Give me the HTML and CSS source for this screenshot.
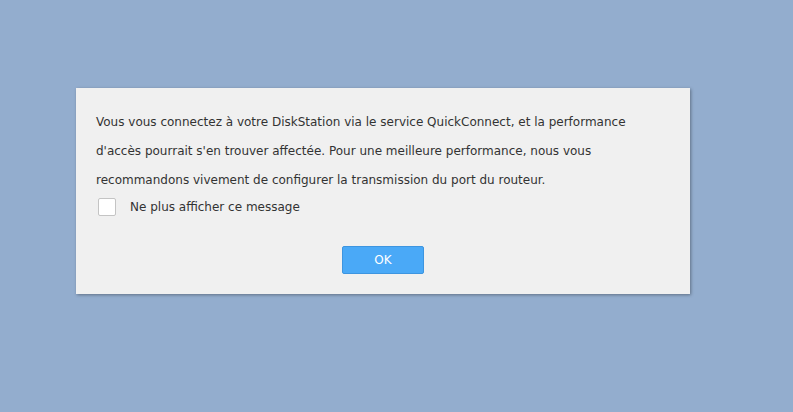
FILE: index.html
```html
<!DOCTYPE html>
<html lang="fr">
<head>
    <meta charset="UTF-8">
    <title>QuickConnect</title>
    <link rel="stylesheet" href="styles.css">
</head>
<body>
    <div class="dialog">
        <p class="message">Vous vous connectez à votre DiskStation via le service QuickConnect, et la performance<br>d'accès pourrait s'en trouver affectée. Pour une meilleure performance, nous vous<br>recommandons vivement de configurer la transmission du port du routeur.</p>
        <label class="check">
            <span class="box"></span>
            <span>Ne plus afficher ce message</span>
        </label>
        <div class="actions">
            <button class="button">OK</button>
        </div>
    </div>
</body>
</html>
```

FILE: styles.css
```css
body {
    margin: 0;
    padding: 88px 0 0 76px;
    height: 412px;
    box-sizing: border-box;
    background-color: #93adce;
    font-family: 'DejaVu Sans', Verdana, sans-serif;
    color: #333;
}

.dialog {
    box-sizing: border-box;
    width: 614px;
    height: 206px;
    padding: 20px 20px 0 20px;
    background-color: #f0f0f0;
    box-shadow: 1px 1px 3px rgba(0, 0, 0, 0.35);
}

.message {
    margin: 0;
    font-size: 12px;
    line-height: 29px;
    white-space: nowrap;
}

.check {
    display: flex;
    align-items: center;
    gap: 14px;
    margin: 2px 0 0 2px;
    height: 20px;
    font-size: 12px;
}

.box {
    width: 16px;
    height: 16px;
    background-color: #fff;
    border: 1px solid #c4c4c4;
    border-radius: 2px;
}

.actions {
    display: flex;
    justify-content: center;
    margin-top: 29px;
}

.button {
    width: 82px;
    height: 28px;
    background-color: #4aa9f7;
    border: 1px solid #3d95e0;
    border-radius: 2px;
    color: #fff;
    font-family: 'DejaVu Sans', Verdana, sans-serif;
    font-size: 12px;
    margin-left: 0;
}
```
